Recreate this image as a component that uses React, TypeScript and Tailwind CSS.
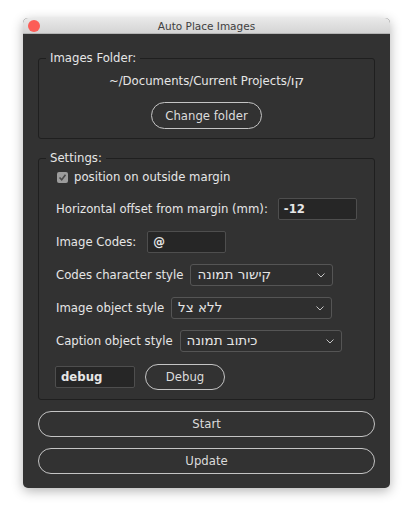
import React from "react";

function Chevron() {
  return (
    <svg width="8" height="5" viewBox="0 0 8 5" className="shrink-0">
      <polyline points="0.5,0.5 4,4 7.5,0.5" fill="none" stroke="#c4c4c4" strokeWidth="1" />
    </svg>
  );
}

function Select({ value, width }: { value: string; width: string }) {
  return (
    <div
      className={`${width} h-[22px] flex items-center justify-between pl-[6px] pr-[7px] border border-[#555555] rounded-[3px] bg-[#2f2f2f]`}
    >
      <span dir="rtl" className="text-[13.5px] leading-none text-[#e4e4e4]">
        {value}
      </span>
      <Chevron />
    </div>
  );
}

function Input({ value, width }: { value: string; width: string }) {
  return (
    <div
      className={`${width} h-[22px] flex items-center px-[5px] border border-[#4e4e4e] rounded-[2px] bg-[#262626] font-bold text-[#e6e6e6]`}
    >
      {value}
    </div>
  );
}

function PillButton({ label, className }: { label: string; className: string }) {
  return (
    <div
      className={`${className} flex items-center justify-center border border-[#c4c4c4] rounded-full text-[#dcdcdc]`}
    >
      {label}
    </div>
  );
}

export default function App() {
  return (
    <div
      className="w-[413px] h-[517px] bg-white pt-[18px] pl-[23px] text-[11.7px] leading-[14px]"
      style={{ fontFamily: '"DejaVu Sans", "Noto Sans", sans-serif' }}
    >
      <div className="w-[367px] h-[470px] rounded-[5px] overflow-hidden bg-[#323232] shadow-[0_3px_12px_rgba(0,0,0,0.3)] flex flex-col">
        <div className="relative h-[16px] shrink-0 flex items-center justify-center bg-gradient-to-b from-[#e9e9e9] to-[#d4d4d4] border-b border-[#b4b4b4]">
          <div className="absolute left-[5px] top-[2px] w-[12px] h-[12px] rounded-full bg-[#fc5d57]" />
          <span className="text-[10.5px] text-[#404040]">Auto Place Images</span>
        </div>

        <div className="px-[15px] pt-[17px] flex flex-col">
          <fieldset className="border border-[#1f1f1f] rounded-[3px]">
            <legend className="ml-[7px] px-[4px] text-[#e6e6e6]">Images Folder:</legend>
            <div className="flex flex-col items-center pt-[9px] pb-[9px]">
              <div className="h-[14px] flex items-center text-[#e6e6e6]">
                <span>~/Documents/Current Projects/</span>
                <span className="text-[13.5px] leading-none">קו</span>
              </div>
              <PillButton label="Change folder" className="mt-[14px] w-[111px] h-[27px]" />
            </div>
          </fieldset>

          <fieldset className="mt-[12px] border border-[#1f1f1f] rounded-[3px]">
            <legend className="ml-[7px] px-[4px] text-[#e6e6e6]">Settings:</legend>
            <div className="flex flex-col pl-[17px] pt-[4px] pb-[9px] text-[#e6e6e6]">
              <div className="h-[14px] flex items-center gap-[6px] translate-y-[1px]">
                <div className="ml-[1px] w-[11px] h-[11px] rounded-[2px] bg-[#9c9c9c] flex items-center justify-center">
                  <svg width="9" height="9" viewBox="0 0 9 9">
                    <polyline points="1.5,4.5 3.7,6.8 7.5,1.8" fill="none" stroke="#4a4a4a" strokeWidth="1.6" />
                  </svg>
                </div>
                <span>position on outside margin</span>
              </div>

              <div className="mt-[15px] h-[22px] flex items-center gap-[10px]">
                <span>Horizontal offset from margin (mm):</span>
                <Input value="-12" width="w-[79px]" />
              </div>

              <div className="mt-[11px] h-[22px] flex items-center gap-[11px]">
                <span>Image Codes:</span>
                <Input value="@" width="w-[79px]" />
              </div>

              <div className="mt-[11px] h-[22px] flex items-center gap-[7px]">
                <span>Codes character style</span>
                <Select value="קישור תמונה" width="w-[143px]" />
              </div>

              <div className="mt-[11px] h-[22px] flex items-center gap-[7px]">
                <span>Image object style</span>
                <Select value="ללא צל" width="w-[161px]" />
              </div>

              <div className="mt-[11px] h-[22px] flex items-center gap-[7px]">
                <span>Caption object style</span>
                <Select value="כיתוב תמונה" width="w-[162px]" />
              </div>

              <div className="mt-[12px] h-[26px] flex items-center gap-[10px] -ml-[1px]">
                <Input value="debug" width="w-[80px]" />
                <PillButton label="Debug" className="w-[80px] h-[26px]" />
              </div>
            </div>
          </fieldset>

          <PillButton label="Start" className="mt-[11px] h-[26px] w-full" />
          <PillButton label="Update" className="mt-[11px] h-[26px] w-full" />
        </div>
      </div>
    </div>
  );
}
